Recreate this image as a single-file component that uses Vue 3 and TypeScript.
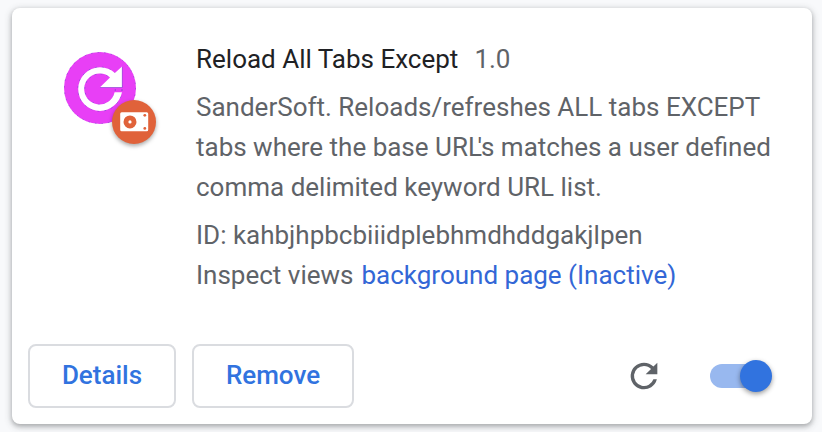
<script setup lang="ts">
import { ref } from 'vue'

const extension = {
  name: 'Reload All Tabs Except',
  version: '1.0',
  description:
    "SanderSoft. Reloads/refreshes ALL tabs EXCEPT tabs where the base URL's matches a user defined comma delimited keyword URL list.",
  id: 'kahbjhpbcbiiidplebhmdhddgakjlpen',
  view: 'background page (Inactive)',
}

// The apostrophe is kerned against the capital before it.
const [beforeQuote, afterQuote] = extension.description.split("L's")

const enabled = ref(true)
</script>

<template>
  <main class="page">
    <article class="card">
      <div class="main">
        <div class="icon-wrap">
          <svg class="icon" viewBox="0 0 72 72">
            <circle cx="36" cy="36" r="36" fill="#e83ff6" />
            <circle cx="36" cy="36" r="35.6" fill="none" stroke="#6a48c8" stroke-width=".8" stroke-opacity=".6" stroke-dasharray="1.6 5" />
            <circle cx="36" cy="37.1" r="22" fill="none" stroke="#5a48c8" stroke-width="1" stroke-opacity=".7" class="outer-edge" />
            <circle cx="36" cy="37.1" r="15.3" fill="none" stroke="#5a48c8" stroke-width="1" stroke-opacity=".6" class="inner-edge" />
            <path
              d="M50.9 20.9C47 17.4 41.8 15.3 36 15.3a21.8 21.8 0 1 0 0 43.6c10.6 0 19.6-7.8 22-18.6h-7.4A15.4 15.4 0 1 1 36 21.6c4.2 0 7.4 1.4 10 3.8L36 35.2H58V14.4z"
              fill="#fff"
            />
            <path d="M36 35.5H58.3V15" fill="none" stroke="#7a55cc" stroke-width=".7" stroke-opacity=".8" />
          </svg>
          <span class="badge">
            <svg viewBox="0 0 44 44">
              <path
                fill="#fff"
                fill-rule="evenodd"
                d="M9.7 12.3h25a1.5 1.5 0 0 1 1.5 1.5v16a1.5 1.5 0 0 1-1.5 1.5h-25a1.5 1.5 0 0 1-1.5-1.5v-16a1.5 1.5 0 0 1 1.5-1.5zM18 15.4a6.5 6.5 0 1 0 0 13a6.5 6.5 0 1 0 0-13z"
              />
              <circle cx="18" cy="21.9" r="1.6" fill="#fff" />
              <circle cx="32.8" cy="15.3" r="1.4" fill="#e0623a" />
              <circle cx="32.8" cy="28.4" r="1.4" fill="#e0623a" />
            </svg>
          </span>
        </div>
        <div class="content">
          <div class="heading">
            <span class="name">{{ extension.name }}</span>
            <span class="version">{{ extension.version }}</span>
          </div>
          <p class="description">{{ beforeQuote }}<span class="kern">L</span>'s{{ afterQuote }}</p>
          <div class="id">ID: {{ extension.id }}</div>
          <div class="views">
            <span class="views-label">Inspect views</span>
            <a class="link">{{ extension.view }}</a>
          </div>
        </div>
      </div>
      <div class="actions">
        <button class="btn details">Details</button>
        <button class="btn remove">Remove</button>
        <svg class="reload" viewBox="0 0 24 24">
          <path
            d="M17.65 6.35A7.96 7.96 0 0 0 12 4a8 8 0 1 0 7.73 10h-2.08A6 6 0 1 1 12 6c1.66 0 3.14.69 4.22 1.78L13 11h7V4z"
          />
        </svg>
        <span class="toggle" :class="{ on: enabled }" role="switch" :aria-checked="enabled" @click="enabled = !enabled">
          <span class="knob"></span>
        </span>
      </div>
    </article>
  </main>
</template>

<style>
body {
  background: #f8f9fa;
}
</style>

<style scoped>
.page {
  box-sizing: border-box;
  width: 822px;
  height: 432px;
  padding: 8px 10px 8px 12px;
  overflow: hidden;
  background: #f8f9fb;
  font-family: Roboto, sans-serif;
  font-size: 26px;
  line-height: 40px;
  color: #5f6368;
}
.card {
  display: flex;
  flex-direction: column;
  box-sizing: border-box;
  height: 416px;
  border-radius: 8px;
  background: #fff;
  box-shadow: 0 2px 4px rgba(60, 64, 67, 0.3), 0 2px 6px 2px rgba(60, 64, 67, 0.17);
}
.main {
  display: flex;
  flex: 1;
  padding: 31px 32px 0 52px;
}
.icon-wrap {
  position: relative;
  flex: none;
  width: 72px;
  height: 72px;
  margin: 13px 60px 0 0;
}
.icon {
  display: block;
  width: 72px;
  height: 72px;
}
.badge {
  position: absolute;
  left: 48px;
  top: 48px;
  width: 44px;
  height: 44px;
  border-radius: 50%;
  background: #e0623a;
  box-shadow: 0 2px 4px rgba(0, 0, 0, 0.35);
}
.badge svg {
  display: block;
}
.outer-edge {
  stroke-dasharray: 2 5;
}
.inner-edge {
  stroke-dasharray: 2 4;
}
.content {
  flex: 1;
  min-width: 0;
}
.heading {
  display: flex;
  gap: 16px;
  margin-bottom: 8px;
}
.name {
  color: #202124;
}
.description {
  margin: 0 0 8px;
}
.kern {
  letter-spacing: -4.5px;
}
.views {
  display: flex;
  gap: 8px;
}
.link {
  color: #3367d6;
}
.actions {
  display: flex;
  align-items: center;
  padding: 0 40px 16px 16px;
}
.btn {
  box-sizing: border-box;
  height: 64px;
  padding: 0 0 2px;
  border: 2px solid #dadce0;
  border-radius: 8px;
  background: #fff;
  color: #3173df;
  font: 500 26px/1 Roboto, sans-serif;
}
.details {
  width: 148px;
}
.remove {
  width: 162px;
  margin-left: 16px;
}
.reload {
  width: 40px;
  height: 40px;
  margin-left: auto;
  fill: #5f6368;
}
.toggle {
  display: flex;
  align-items: center;
  width: 56px;
  height: 24px;
  margin-left: 46px;
  margin-right: 6px;
  border-radius: 12px;
  background: #bdc1c6;
}
.toggle.on {
  background: #98b8ef;
}
.knob {
  flex: none;
  width: 32px;
  height: 32px;
  border-radius: 50%;
  background: #fff;
  box-shadow: 0 2px 5px rgba(0, 0, 0, 0.4);
}
.on .knob {
  margin-left: 30px;
  background: #3173df;
}
</style>
